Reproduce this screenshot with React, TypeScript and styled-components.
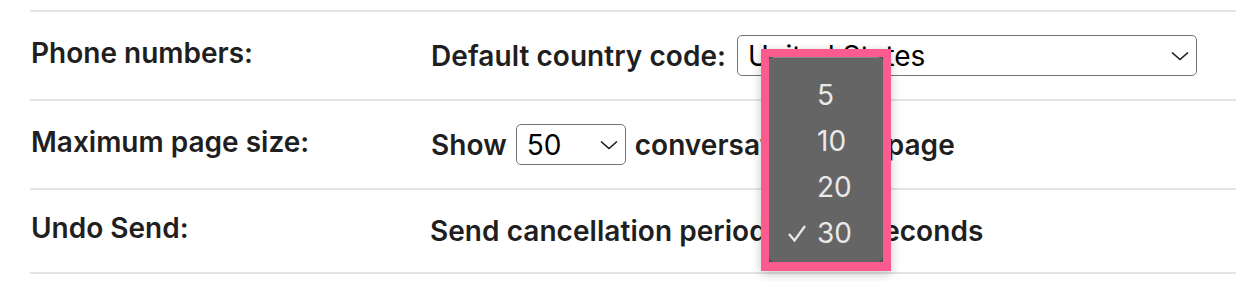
import React from "react";
import styled, { createGlobalStyle } from "styled-components";

const GlobalStyle = createGlobalStyle`
  html,
  body {
    margin: 0;
    background: #ffffff;
  }

  body {
    font-family: Inter, "Noto Sans", sans-serif;
    color: #1f1f1f;
  }
`;

const Page = styled.div`
  position: relative;
  width: 1236px;
  height: 282px;
  padding: 10px 0 0 30px;
  box-sizing: border-box;
  overflow: hidden;
`;

const Table = styled.div`
  border-top: 2px solid #e4e4e4;
`;

const Row = styled.div<{ $height: number }>`
  height: ${(p) => p.$height}px;
  box-sizing: border-box;
  border-bottom: 2px solid #e4e4e4;

  display: grid;
  grid-template-columns: 401px 1fr;
  align-items: center;
`;

const Label = styled.div`
  padding: 0 0 6px 1px;
  font-size: 28px;
  line-height: 36px;
  font-weight: 600;
`;

const Value = styled.div<{ $shift?: number; $gap?: number }>`
  margin-left: ${(p) => p.$shift ?? 0}px;
  display: flex;
  align-items: center;
  gap: ${(p) => p.$gap ?? 10}px;

  font-size: 28px;
  line-height: 36px;
  font-weight: 600;
  letter-spacing: 0.05px;
  white-space: nowrap;
`;

const SelectBox = styled.div<{ $width: number; $height?: number }>`
  width: ${(p) => p.$width}px;
  height: ${(p) => p.$height ?? 41}px;
  box-sizing: border-box;
  padding: 0 7px 0 10px;
  border: 1.5px solid #747474;
  border-radius: 5px;
  flex-shrink: 0;

  display: flex;
  align-items: center;
  justify-content: space-between;

  font-weight: 400;
  letter-spacing: 0;
  color: #000000;
`;

const Chevron = () => (
  <svg width="18" height="10" viewBox="0 0 18 10" fill="none">
    <path d="M1 1.5 L9 8.5 L17 1.5" stroke="#1a1a1a" strokeWidth="1.6" />
  </svg>
);

const Popup = styled.div`
  position: absolute;
  left: 761px;
  top: 49px;
  width: 130px;
  height: 222px;
  box-sizing: border-box;
  border: 8px solid #fb5b8e;
  border-bottom-width: 9px;
  background: #4e4e4e;
  box-shadow: 0 3px 10px rgba(0, 0, 0, 0.22);
`;

const Menu = styled.div`
  height: 100%;
  box-sizing: border-box;
  padding: 14px 0 8px;
  border-radius: 6px;
  border-top: 1px solid #878787;
  background: #656565;
`;

const Option = styled.div`
  height: 46px;
  display: grid;
  grid-template-columns: 48px 1fr;
  align-items: center;

  font-size: 28px;
  font-weight: 400;
  color: #e9e9e9;
`;

const Check = styled.span`
  padding-left: 19px;
  display: flex;
  align-items: center;
`;

const CheckIcon = () => (
  <svg width="18" height="17" viewBox="0 0 18 17" fill="none">
    <path d="M1 9 L6.5 15.5 L17 1" stroke="#e9e9e9" strokeWidth="2.3" />
  </svg>
);

const options = [
  { value: "5", checked: false },
  { value: "10", checked: false },
  { value: "20", checked: false },
  { value: "30", checked: true },
];

export default function App() {
  return (
    <>
      <GlobalStyle />
      <Page>
        <Table>
          <Row $height={89}>
            <Label>Phone numbers:</Label>
            <Value $gap={11}>
              Default country code:
              <SelectBox $width={460}>
                United States
                <Chevron />
              </SelectBox>
            </Value>
          </Row>
          <Row $height={89}>
            <Label>Maximum page size:</Label>
            <Value $gap={9}>
              Show
              <SelectBox $width={110}>
                50
                <Chevron />
              </SelectBox>
              conversations per page
            </Value>
          </Row>
          <Row $height={84}>
            <Label>Undo Send:</Label>
            <Value $shift={-1}>
              Send cancellation period:
              <SelectBox $width={72} $height={36}>
                30
              </SelectBox>
              seconds
            </Value>
          </Row>
        </Table>
        <Popup>
          <Menu>
            {options.map((o) => (
              <Option key={o.value}>
                <Check>{o.checked && <CheckIcon />}</Check>
                {o.value}
              </Option>
            ))}
          </Menu>
        </Popup>
      </Page>
    </>
  );
}
